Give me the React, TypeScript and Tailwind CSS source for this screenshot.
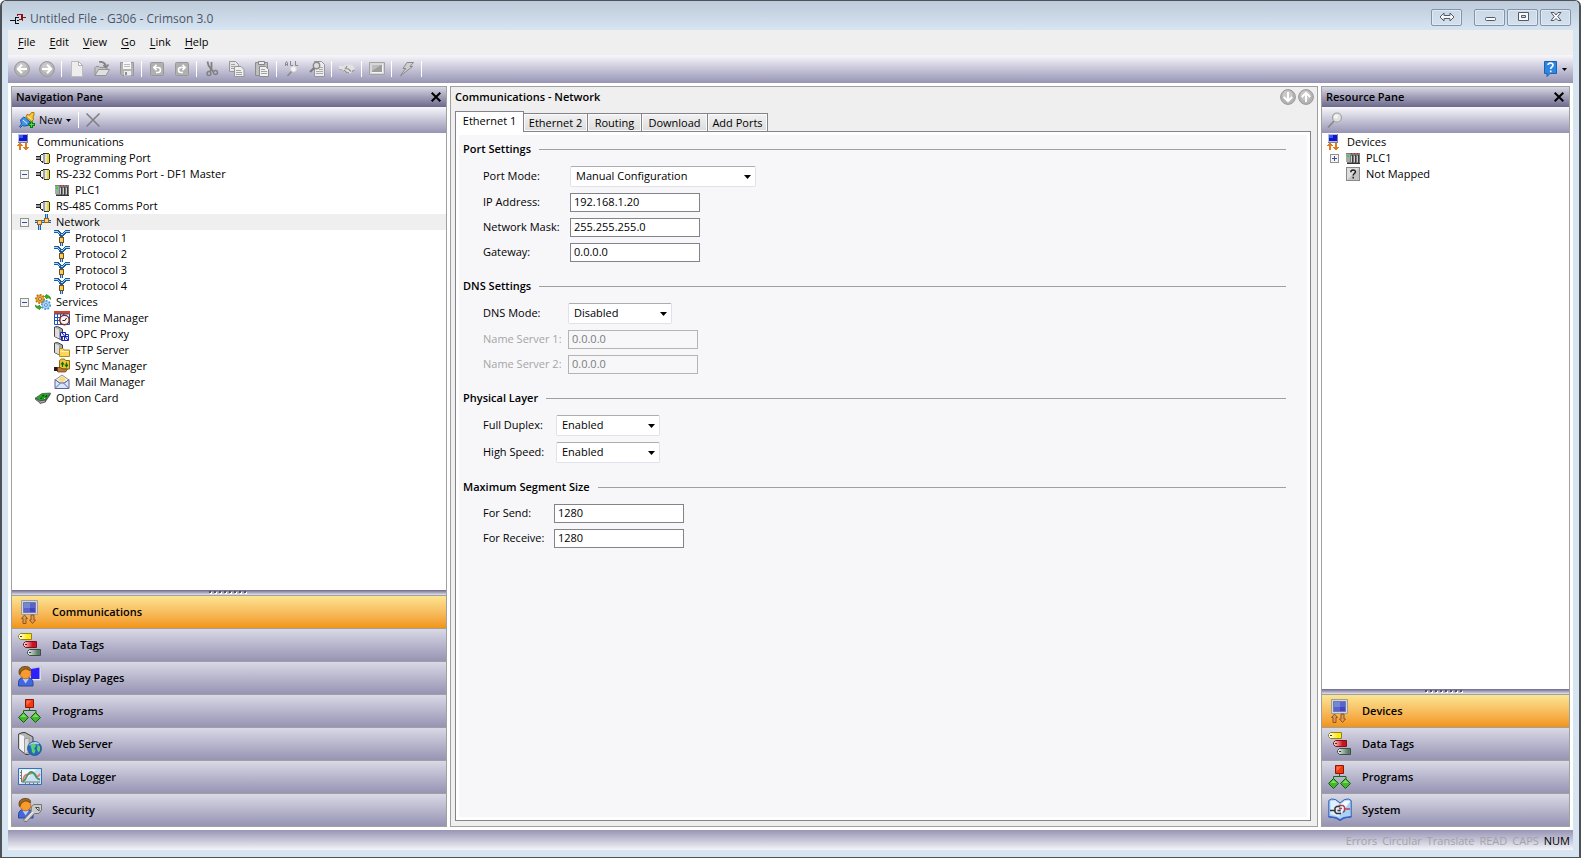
import { useId, useState } from "react";
import type { ReactNode } from "react";

type IconProps = { className?: string };

/* ---------- Small icons (16px) ---------- */

function Svg16({ children, crisp }: { children: ReactNode; crisp?: boolean }) {
  return (
    <svg className="w-4 h-4 shrink-0" viewBox="0 0 16 16" fill="none" shapeRendering={crisp ? "crispEdges" : "auto"} aria-hidden="true">
      {children}
    </svg>
  );
}

function Svg24({ children }: { children: ReactNode }) {
  return (
    <svg className="w-6 h-6 shrink-0" viewBox="0 0 24 24" fill="none" aria-hidden="true">
      {children}
    </svg>
  );
}

function AppIcon() {
  return (
    <svg className="w-4 h-4 shrink-0" viewBox="0 0 16 16" fill="none" shapeRendering="crispEdges" aria-hidden="true">
      <path d="M0 9.500h5M9 6.500H5.500v6H9M7 9.500h2" stroke="#111" />
      <path d="M7 3.500h5M12 2.500v7M12 8.500H8.500M12 6.500h4M7.500 3v2" stroke="#8c1016" />
      <path d="M11.500 3v6" stroke="#8c1016" />
    </svg>
  );
}

function PcIcon() {
  return (
    <Svg16 crisp>
      <path d="M2 0h10v9H2z" fill="#b9c0d6" />
      <path d="M3 1h8v6H3z" fill="#0d16d8" />
      <path d="M3 1h4v3H3z" fill="#3d5cf0" />
      <path d="M11 0h1v9h-1zM2 8h10v1H2z" fill="#7c8194" />
      <path d="M4 9h1v1h1v1h1v1H5v4H3v-4H1v-1h1v-1h1V9z" fill="#e07a1c" />
      <path d="M9 9h2v4h2v1h-1v1h-1v1H9v-1H8v-1H7v-1h2z" fill="#e07a1c" />
    </Svg16>
  );
}

function PortIcon() {
  return (
    <Svg16 crisp>
      <path d="M1 6h5v1H1zM1 9h5v1H1z" fill="#222" />
      <path d="M1 7h5v2H1z" fill="#9a9a9a" />
      <path d="M5 5h1V4h2V3h3v11H9v-1H7v-1H6v-1H5z" fill="#2a2a2a" />
      <path d="M6 5h2v6H6z" fill="#f4f4f4" />
      <path d="M8 4h2v9H8z" fill="#a2a2a2" />
      <path d="M10 3h4v1h1v9h-1v1h-4z" fill="#3a3a30" />
      <path d="M10 4h2v9h-2z" fill="#e4e4e4" />
      <path d="M12 4h2v9h-2z" fill="#e8dc18" />
    </Svg16>
  );
}

function PlcIcon() {
  return (
    <Svg16 crisp>
      <path d="M1 3h14v10H2l-1-1z" fill="#7a7a7a" />
      <path d="M1 4h4v8H1z" fill="#a7a7a7" />
      <path d="M6 6h1v6H6zM9 6h1v6H9zM12 6h1v6h-1z" fill="#d0d0d0" />
      <path d="M7 5h1v8H7zM10 5h1v8h-1zM13 5h1v8h-1z" fill="#3c3c3c" />
      <path d="M2 5h2v2H2z" fill="#13e62c" />
      <path d="M6 3h1v1H6zM9 3h1v1H9zM12 3h1v1h-1z" fill="#e01414" />
      <path d="M2 13h13v1H2z" fill="#333" />
    </Svg16>
  );
}

function NetworkIcon() {
  return (
    <Svg16 crisp>
      <path d="M0 6h16v3H0z" fill="#1c5fae" />
      <path d="M0 7h16v1H0z" fill="#9cd0ff" />
      <path d="M10 0h3v5h-3zM3 10h3v6H3z" fill="#1c5fae" />
      <path d="M11 0h1v5h-1zM4 10h1v6H4z" fill="#9cd0ff" />
      <path d="M2 6h5v5H2zM9 4h5v5H9z" fill="#a86400" />
      <path d="M3 7h3v3H3zM10 5h3v3h-3z" fill="#fcd27c" />
    </Svg16>
  );
}

function ProtocolIcon() {
  return (
    <Svg16 crisp>
      <path d="M0 0h5v1h1v1h1v1h2V2h1V1h1V0h5v3h-4v1h-1v1h-1v1H9v1H6V6H5V4H4V3H0z" fill="#1c5a9e" />
      <path d="M0 1h4v1h1v1h1v1h3V3h1V2h1V1h5v1h-5v1h-1v1H9v1H7V4H5V3H4V2H0z" fill="#a9d5fb" />
      <path d="M6 12h3v4H6z" fill="#1c5fae" />
      <path d="M7 12h1v4H7z" fill="#9cd0ff" />
      <path d="M5 7h5v6H5z" fill="#7a5200" />
      <path d="M6 8h3v4H6z" fill="#fbc95f" />
    </Svg16>
  );
}

function ServicesIcon() {
  return (
    <Svg16>
      <circle cx="5" cy="5" r="4" stroke="#b9720c" strokeWidth="2" strokeDasharray="1.800 1.200" />
      <circle cx="5" cy="5" r="3.600" fill="#eda42c" stroke="#c07a10" strokeWidth=".6" />
      <circle cx="5" cy="5" r="1.400" fill="#fff" stroke="#8a5200" strokeWidth=".8" />
      <circle cx="11" cy="11" r="4" stroke="#4a90d6" strokeWidth="2" strokeDasharray="1.800 1.200" />
      <circle cx="11" cy="11" r="3.600" fill="#a8d8ff" stroke="#5aa2e2" strokeWidth=".6" />
      <circle cx="11" cy="11" r="1.400" fill="#fff" stroke="#3a78ba" strokeWidth=".8" />
      <path d="M9.500 2.500L12 .3v1.200c2.500 0 3.600 1.500 3.600 4-1-1.500-2-1.800-3.600-1.700v1.200z" fill="#35b323" stroke="#14730a" strokeWidth=".6" />
      <path d="M6.500 13.500L4 15.700v-1.200c-2.500 0-3.600-1-3.700-3.500 1 1 2 1.400 3.700 1.300V11z" fill="#35b323" stroke="#14730a" strokeWidth=".6" />
    </Svg16>
  );
}

function TimeIcon() {
  return (
    <Svg16>
      <path d="M0 1h16v3H0z" fill="#d6452b" />
      <path d="M.5 4h15v10.500H.5z" fill="#fff" stroke="#1f55ac" />
      <path d="M0 7.500h16M0 10.500h16M3.500 4v10M6.500 4v10M9.500 4v10" stroke="#1f55ac" />
      <circle cx="10.500" cy="10" r="4.700" fill="#f6f6f6" stroke="#8d2a22" strokeWidth="1.500" />
      <path d="M8.500 10.500h2.500l1.500-2.500" stroke="#222" />
    </Svg16>
  );
}

function ServerShape() {
  return (
    <>
      <path d="M.5 1L3.500.5 8.500 3v10.500h-2L.5 10.500z" fill="#a6a6a6" stroke="#444" />
      <path d="M1 1.500L5 3.500v9L1 10.500z" fill="#dedede" />
    </>
  );
}

function OpcIcon() {
  return (
    <Svg16>
      <ServerShape />
      <path d="M6.500 6.500h5v4h-5zM10.500 10.500h4v4h-4z" fill="#e9ecff" stroke="#1620b8" />
      <path d="M7.500 11v3.500h3M11.500 8.500h3v2M8 7l6 7" stroke="#1620b8" />
    </Svg16>
  );
}

function FtpIcon() {
  return (
    <Svg16>
      <ServerShape />
      <path d="M5.500 14.500v-8h3.500l1 1.500h5.500v6.500z" fill="#fbd75a" stroke="#b5851e" />
      <path d="M6.500 9.500h8" stroke="#fff0b0" />
    </Svg16>
  );
}

function SyncIcon() {
  return (
    <Svg16>
      <path d="M5.500 2.500L7.500 1h3l1 1.500h4v8.500h-10z" fill="#edc832" stroke="#8d6b0c" />
      <path d="M8.500 9V5M7 6.500L8.500 4.500 10 6.500M12.500 4.500v4M11 6.700l1.500 2 1.500-2" stroke="#0a6d14" strokeWidth="1.200" />
      <path d="M3 9.500h3l3 1.500h4.500L11.500 14H4l-1-1z" fill="#c07a3e" stroke="#5d3311" strokeWidth=".7" />
      <path d="M0 9h3.500v4H0z" fill="#231b16" />
    </Svg16>
  );
}

function MailIcon() {
  return (
    <Svg16>
      <path d="M1 6l7-5 7 5-7 4z" fill="#fff6c8" stroke="#8a89b4" />
      <path d="M4 5.500L8 2l4 3.500L8 9z" fill="#f5d98a" />
      <path d="M1 5.500v9h14v-9L10.500 9h-5z" fill="#d6e6fc" stroke="#5f619c" />
      <path d="M1.500 14L6 9.500M14.500 14L10 9.500" stroke="#6a6ba0" />
    </Svg16>
  );
}

function CardIcon() {
  return (
    <Svg16>
      <path d="M.5 8L7 3.500l8.500-.5-5 7-6 .8z" fill="#2aa52c" stroke="#47524a" strokeWidth=".7" />
      <path d="M.5 8l4 2.800 6-.8v2L5 13.500 4 12 .5 9.500z" fill="#a4a4a4" stroke="#333" strokeWidth=".7" />
      <path d="M10.500 10l5-7v1.800l-5 7.200z" fill="#4a4a4a" />
      <path d="M7.500 6.500l1.500-1.500M10.500 7l1.500-1.500M5.500 8.500L7 7.800" stroke="#083d0a" strokeWidth="1.300" />
      <path d="M9 9l1-1" stroke="#8ff08a" />
    </Svg16>
  );
}

function UnmappedIcon() {
  return (
    <Svg16>
      <rect x="1.500" y="1.500" width="13" height="13" fill="#c4c4c4" stroke="#8a8a8a" />
      <path d="M2 2h12L2 14z" fill="#dedede" />
      <path d="M5.800 6.200c0-3 4.600-3 4.600-.4 0 1.700-2.200 1.700-2.200 3.600M8.200 10.800v1.700" stroke="#222" strokeWidth="1.500" />
    </Svg16>
  );
}

/* ---------- Category icons (24px) ---------- */

function CommsBigIcon() {
  return (
    <Svg24>
      <path d="M3.500.5h16v14h-16z" fill="#d4d6de" stroke="#9a9caa" />
      <path d="M5.500 2.500h12v10h-12z" fill="#4443c4" stroke="#77779f" />
      <path d="M6 3h6v5H6z" fill="#7289d6" />
      <path d="M12 3h5v5h-5zM6 8h6v4H6z" fill="#5a63cc" />
      <path d="M6.500 15l3 3.500H8v5H5v-5H3.500z" fill="#d99a5a" stroke="#94531c" />
      <path d="M14.500 23.500l-3-3.500H13v-5h3v5h1.500z" fill="#d99a5a" stroke="#94531c" />
    </Svg24>
  );
}

function TagsIcon() {
  const id = useId();
  return (
    <Svg24>
      <defs>
        <linearGradient id={id + "y"}><stop offset="0" stopColor="#fff" /><stop offset=".7" stopColor="#ffe912" /></linearGradient>
        <linearGradient id={id + "r"}><stop offset="0" stopColor="#fbe0da" /><stop offset=".7" stopColor="#cc1220" /></linearGradient>
        <linearGradient id={id + "g"}><stop offset="0" stopColor="#eef3ee" /><stop offset=".8" stopColor="#5b7a66" /></linearGradient>
      </defs>
      <path d="M2.500.5h11v6h-11l-2-2v-2z" fill={`url(#${id}y)`} stroke="#8d8420" />
      <path d="M7.500 8.500h11v6h-11l-2-2v-2z" fill={`url(#${id}r)`} stroke="#7c1218" />
      <path d="M11.500 16.500h11v6h-11l-2-2v-2z" fill={`url(#${id}g)`} stroke="#3c5044" />
      <path d="M2 3h2v1H2zM7 11h2v1H7zM11 19h2v1h-2z" fill="#333" />
    </Svg24>
  );
}

function Person() {
  return (
    <>
      <path d="M.5 20v-3.500c0-3 2-4.500 4-5h6c2 .5 4.500 2 4.500 5V20z" fill="#4468dc" stroke="#2846a0" />
      <path d="M4.500 12.500l3 5 3.500-5z" fill="#b9cdfb" />
      <circle cx="7.500" cy="7.500" r="5.300" fill="#f99a2c" stroke="#b3661a" strokeWidth=".8" />
      <path d="M1.500 8.500C-.2 4 2.500.5 7 .5c4.500 0 6 1.800 5.500 4C10 4 9.500 2.800 7.500 3c-2 .3-2 1.200-3.500 1.500-1.200.3-1 2.500-2.500 4z" fill="#9c6a24" stroke="#5c3a0c" strokeWidth=".8" />
    </>
  );
}

function PagesIcon() {
  return (
    <Svg24>
      <path d="M12 3l11-2.500v14L12 14.500z" fill="#ececf2" stroke="#c0c0cc" strokeWidth=".8" />
      <path d="M13 3l8.500-1.500V13H13z" fill="#2d20ff" />
      <Person />
    </Svg24>
  );
}

function ProgramsIcon() {
  return (
    <Svg24>
      <path d="M11.500 9v2.500M5.500 14.500v-3h12.500v3" stroke="#186818" />
      <path d="M7.500.5h8v8h-8z" fill="#f23a12" stroke="#8f1408" />
      <path d="M8.500 1.500h5l-5 5z" fill="#ff6d48" />
      <path d="M5.500 13.500l5 5-5 5-5-5z" fill="#43b82e" stroke="#17600f" />
      <path d="M17.500 13.500l5 5-5 5-5-5z" fill="#43b82e" stroke="#17600f" />
      <path d="M5.500 15l3 3h-6zM17.500 15l3 3h-6z" fill="#82dc66" />
    </Svg24>
  );
}

function WebIcon() {
  return (
    <Svg24>
      <path d="M.7 2L4 .7 7 .5l8 4.500v15l-4.500 2.500h-3L.7 16.500z" fill="#b4b4b4" stroke="#3c3c3c" />
      <path d="M1.300 2.500L6 4v16.500l-4.700-4z" fill="#f4f4f4" />
      <path d="M6.500 7L11 6v14.500L6.500 21.500z" fill="#dadada" stroke="#888" strokeWidth=".7" />
      <circle cx="16.500" cy="16.500" r="7" fill="#2568c4" stroke="#1c4a86" strokeWidth=".7" />
      <path d="M10.500 14c1.500-4 8-5.500 11-2-3 1-7-1-11 2z" fill="#a9d0f6" />
      <path d="M12.500 13.500c1.500-1.500 3-2 4.500-1.500l1 2-2 2.500 1.500 2-1.500 3.500-2-2-.5-3zM19.500 12.500l2.500 2v4l-1.500 2-1.500-3z" fill="#5fd06a" />
    </Svg24>
  );
}

function LoggerIcon() {
  return (
    <Svg24>
      <path d="M.5 3.500h23v16H.5z" fill="#c8e2f8" stroke="#3b6fb5" />
      <path d="M1.500 4.500h17l-15 14h-2z" fill="#f2f9ff" />
      <path d="M3.500 5v12H22M2 7.500h1.500M2 10.500h1.500M2 13.500h1.500M7.500 19v-1.500M11.500 19v-1.500M15.500 19v-1.500M19.500 19v-1.500" stroke="#777" />
      <path d="M5 16.500C5.500 10 8 9.500 9.500 9.500c3 0 4-2 6-1.500 2.500.8 2 3.500 4 3.500 1 0 1.500-1.500 2.500-2.500" stroke="#ec7a70" strokeWidth="1.800" />
      <path d="M4.500 16.500c4-.5 4-9.500 9-9.500 4 0 3.500 7.500 8.500 7.500" stroke="#3f9a66" strokeWidth="1.800" />
    </Svg24>
  );
}

function SecurityIcon() {
  return (
    <Svg24>
      <Person />
      <path d="M13.500 8.500L16 6.500h7.500V12l-2.500 3.500h-4.500L9 23.500H6.500l-1-1.500 7.500-8z" fill="#cacaca" stroke="#747474" />
      <path d="M17.500 9.500h3.500V13z" fill="#eee" stroke="#4a4a4a" />
      <path d="M8 21.500l7-7.500" stroke="#f2f2f2" />
    </Svg24>
  );
}

function SystemIcon() {
  return (
    <Svg24>
      <path d="M.8 2.500L3.500 1l4 .5L12 5l4.500-3.500 4-.5 2.700 1.500v16.500l-4 .5-3.200.5-4 2.500-4-2.500-3.200-.5-4-.5z" fill="#a9d2f8" stroke="#2e5fae" />
      <path d="M.8 18.800l4 .5 3.200.5 4 2.200 4-2.200 3.200-.5 4-.5" stroke="#3b62c4" strokeWidth="1.600" />
      <path d="M2.500 3l4.500-.5 4.500 3.500v13l-9-3z" fill="#e2f0fe" />
      <path d="M17 3l3.500-.5 1.500 1-9 12V6z" fill="#f4faff" />
      <path d="M2 12.500h5M12 8.500H8.500l-1.500 1.500v4l1.500 1.500H13M9.500 12.500h3" stroke="#333" strokeWidth="1.500" />
      <path d="M10.500 7.500h4.500l1.500 1.500v4L15 14.500M11 10.500h3M16.500 11h5.500" stroke="#b0444e" strokeWidth="1.500" />
    </Svg24>
  );
}

/* ---------- Toolbar icons ---------- */

function Arrow({ rotate }: { rotate: string }) {
  return (
    <svg className="w-4 h-4 shrink-0" viewBox="0 0 16 16" fill="none" aria-hidden="true">
      <circle cx="8" cy="8" r="7.400" fill="#b4b4b4" stroke="#989898" />
      <circle cx="7.500" cy="6.500" r="5" fill="#c8c8c8" />
      <g transform={rotate}>
        <path d="M13 8H4M8 3.800L3.800 8 8 12.200" stroke="#fff" strokeWidth="2" />
      </g>
    </svg>
  );
}

const toolIcons: Record<string, ReactNode> = {
  Back: <Arrow rotate="rotate(0 8 8)" />,
  Forward: <Arrow rotate="rotate(180 8 8)" />,
  New: (
    <Svg16>
      <path d="M2.500.5h7l4 4v11h-11z" fill="#ededed" stroke="#bdbdbd" />
      <path d="M9.500.5v4h4z" fill="#fff" stroke="#b0b0b0" />
    </Svg16>
  ),
  Open: (
    <Svg16>
      <path d="M1 14.500v-8l1-1h3l1 1h7v3" fill="#c4c4c4" stroke="#949494" />
      <path d="M1 14.500l3.500-6h11l-3.500 6z" fill="#e0e0e0" stroke="#949494" />
      <path d="M5 .8c4-.3 6.500 1.700 7 5M9.500 4l2.500 2.500L14.500 3.500" stroke="#858585" strokeWidth="1.800" />
    </Svg16>
  ),
  Save: (
    <Svg16>
      <path d="M1.500 1.500h13v13H3l-1.500-1.500z" fill="#b4b4b4" stroke="#979797" />
      <path d="M4 1h8v7H4z" fill="#f6f6f6" />
      <path d="M5 3.500h6M5 5.500h6" stroke="#bbb" />
      <path d="M5 10h7v4.500H5z" fill="#ececec" />
      <path d="M6 11h2v3H6z" fill="#8e8e8e" />
    </Svg16>
  ),
  Undo: (
    <Svg16>
      <rect x="1.500" y="1.500" width="13" height="13" rx="1" fill="#b0b0b0" stroke="#989898" />
      <path d="M5 6.500h4a2.300 2.300 0 010 5H7M7.500 3.800L4.800 6.500l2.700 2.700" stroke="#fff" strokeWidth="1.600" />
    </Svg16>
  ),
  Redo: (
    <Svg16>
      <rect x="1.500" y="1.500" width="13" height="13" rx="1" fill="#b0b0b0" stroke="#989898" />
      <path d="M11 6.500H7a2.300 2.300 0 000 5h2M8.500 3.800l2.700 2.700-2.700 2.700" stroke="#fff" strokeWidth="1.600" />
    </Svg16>
  ),
  Cut: (
    <Svg16>
      <path d="M3.500.5l1 4 5 6.500M7.500 1v6L6 11" stroke="#808080" strokeWidth="1.800" />
      <circle cx="5" cy="12.500" r="2" stroke="#808080" strokeWidth="1.400" />
      <circle cx="11.500" cy="11.500" r="2" stroke="#808080" strokeWidth="1.400" />
    </Svg16>
  ),
  Copy: (
    <Svg16>
      <path d="M.5.5h6l3 3v7h-9z" fill="#e6e6e6" stroke="#969696" />
      <path d="M5.500 5.500h6.500l3 3v7H5.500z" fill="#efefef" stroke="#969696" />
      <path d="M2 3.500h4M2 5.500h3M2 7.500h3M7 9.500h5M7 11.500h6M7 13.500h6" stroke="#a2a2a2" />
    </Svg16>
  ),
  Paste: (
    <Svg16>
      <path d="M1.500 1.500h12v13h-12z" fill="#bebebe" stroke="#8c8c8c" />
      <path d="M4.500.5h6v3h-6z" fill="#eee" stroke="#858585" />
      <path d="M5.500 5.500h6l3 3v7h-9z" fill="#f0f0f0" stroke="#8c8c8c" />
      <path d="M7 8.500h4M7 10.500h6M7 12.500h6" stroke="#a2a2a2" />
    </Svg16>
  ),
  "Find All": (
    <Svg16>
      <path d="M1.500 5V2l1-1.500 1 1.500v3M1.500 3.500h2M6.500 0v4.500H9M11.500 0v4.500H14" stroke="#8a8a8a" />
      <circle cx="9.500" cy="8" r="2.800" fill="#f4f4f4" stroke="#dcdcdc" />
      <path d="M7.500 10.500L3.500 15" stroke="#8a8a8a" strokeWidth="1.500" />
    </Svg16>
  ),
  Find: (
    <Svg16>
      <path d="M5.500.5h7l3 3v12h-10z" fill="#ececec" stroke="#969696" />
      <path d="M11 6.500h3M10 8.500h4M7 10.500h7M7 12.500h7" stroke="#aaa" />
      <circle cx="7.500" cy="4.500" r="3.200" fill="#ddd" stroke="#8a8a8a" strokeWidth="1.400" />
      <path d="M5.200 7L1 11" stroke="#7c7c7c" strokeWidth="2.200" />
    </Svg16>
  ),
  Connect: (
    <Svg16>
      <path d="M0 4.500l4 .5 3-1.500h5l3 2 1 3.500-3 1.500-1 1.500-2.500 1L6 11.500 3 9 0 8.500z" fill="#e2e2e2" />
      <path d="M5 9l3 3M8 5L6.500 7.500l3 .5 2.500 2.500M10 12.500L8.500 11M13 10.500l2.500-1.500" stroke="#909090" strokeWidth="1.200" />
      <path d="M0 8.500h2.500L5 10.500" stroke="#a8a8a8" />
    </Svg16>
  ),
  Emulator: (
    <Svg16>
      <path d="M.5 1.500h15v12H.5z" fill="#d8d8d8" stroke="#a2a2a2" />
      <path d="M3 4h10v7H3z" fill="#9c9c9c" />
      <path d="M3 4h9l-9 6z" fill="#bcbcbc" />
      <path d="M2.500 11.500h11V3.500" stroke="#f4f4f4" />
    </Svg16>
  ),
  Update: (
    <Svg16>
      <path d="M8 1.500h6.500L11 5.500h2.500L5 12 1.500 15 4 11l3-3.500H4z" fill="#cfcfcf" stroke="#8a8a8a" />
    </Svg16>
  ),
};

function PlugIcon() {
  return (
    <Svg16>
      <path d="M8 2.500l2.500.5L12.500.5H15V3l-1 2 .5 2.500-2 2L7 5z" fill="#fcc62c" stroke="#a0700a" strokeWidth=".9" />
      <path d="M1.500 8L4.500 5l2 1L11 10l-2 3.500-4 .5-1.500-.5L1.500 15.500l-1-1L2.500 12z" fill="#3f96e6" stroke="#0f4e96" strokeWidth=".9" />
      <path d="M4 8l4 3.500M9 4.500l3 2.500" stroke="#dff0ff" />
      <path d="M12.500 9.500v6.500M9.500 12.500h6.500" stroke="#0d7a10" strokeWidth="3" />
      <path d="M12.500 10.500v4.500M10.500 12.500h4.500" stroke="#4ade46" />
    </Svg16>
  );
}

function CloseGlyph({ className }: IconProps) {
  return (
    <svg className={className} viewBox="0 0 10 10" fill="none" stroke="currentColor" strokeWidth="2" aria-hidden="true">
      <path d="M.7.7l8.600 8.600M9.300.7L.7 9.300" />
    </svg>
  );
}

function Caret() {
  return (
    <svg className="w-[7px] h-1 shrink-0" viewBox="0 0 7 4" aria-hidden="true">
      <path d="M0 0h7L3.500 4z" fill="#000" />
    </svg>
  );
}

function SmallCaret() {
  return (
    <svg className="w-[5px] h-[3px] shrink-0" viewBox="0 0 5 3" aria-hidden="true">
      <path d="M0 0h5L2.500 3z" fill="#000" />
    </svg>
  );
}

/* ---------- Data ---------- */

const menus = ["File", "Edit", "View", "Go", "Link", "Help"];

const toolGroups = [
  ["Back", "Forward"],
  ["New", "Open", "Save"],
  ["Undo", "Redo"],
  ["Cut", "Copy", "Paste"],
  ["Find All", "Find"],
  ["Connect"],
  ["Emulator"],
  ["Update"],
];

type TreeItem = { label: string; level: 0 | 1 | 2; icon: ReactNode; toggle?: "open" | "closed"; selected?: boolean };

const navTree: TreeItem[] = [
  { label: "Communications", level: 0, icon: <PcIcon /> },
  { label: "Programming Port", level: 1, icon: <PortIcon /> },
  { label: "RS-232 Comms Port - DF1 Master", level: 1, icon: <PortIcon />, toggle: "open" },
  { label: "PLC1", level: 2, icon: <PlcIcon /> },
  { label: "RS-485 Comms Port", level: 1, icon: <PortIcon /> },
  { label: "Network", level: 1, icon: <NetworkIcon />, toggle: "open", selected: true },
  { label: "Protocol 1", level: 2, icon: <ProtocolIcon /> },
  { label: "Protocol 2", level: 2, icon: <ProtocolIcon /> },
  { label: "Protocol 3", level: 2, icon: <ProtocolIcon /> },
  { label: "Protocol 4", level: 2, icon: <ProtocolIcon /> },
  { label: "Services", level: 1, icon: <ServicesIcon />, toggle: "open" },
  { label: "Time Manager", level: 2, icon: <TimeIcon /> },
  { label: "OPC Proxy", level: 2, icon: <OpcIcon /> },
  { label: "FTP Server", level: 2, icon: <FtpIcon /> },
  { label: "Sync Manager", level: 2, icon: <SyncIcon /> },
  { label: "Mail Manager", level: 2, icon: <MailIcon /> },
  { label: "Option Card", level: 1, icon: <CardIcon /> },
];

const resourceTree: TreeItem[] = [
  { label: "Devices", level: 0, icon: <PcIcon /> },
  { label: "PLC1", level: 1, icon: <PlcIcon />, toggle: "closed" },
  { label: "Not Mapped", level: 1, icon: <UnmappedIcon /> },
];

type Category = { label: string; icon: ReactNode };

const navCategories: Category[] = [
  { label: "Communications", icon: <CommsBigIcon /> },
  { label: "Data Tags", icon: <TagsIcon /> },
  { label: "Display Pages", icon: <PagesIcon /> },
  { label: "Programs", icon: <ProgramsIcon /> },
  { label: "Web Server", icon: <WebIcon /> },
  { label: "Data Logger", icon: <LoggerIcon /> },
  { label: "Security", icon: <SecurityIcon /> },
];

const resourceCategories: Category[] = [
  { label: "Devices", icon: <CommsBigIcon /> },
  { label: "Data Tags", icon: <TagsIcon /> },
  { label: "Programs", icon: <ProgramsIcon /> },
  { label: "System", icon: <SystemIcon /> },
];

const tabs = [
  { label: "Ethernet 1", width: "w-[69px]" },
  { label: "Ethernet 2", width: "w-[65px]" },
  { label: "Routing", width: "w-[55px]" },
  { label: "Download", width: "w-[67px]" },
  { label: "Add Ports", width: "w-[61px]" },
];

/* ---------- Panes ---------- */

function PaneHeader({ title }: { title: string }) {
  return (
    <div className="h-5 shrink-0 flex items-center justify-between pl-1 pr-[5px] bg-linear-to-b from-[#d8d7e4] to-[#6c698b]">
      <h2 className="font-semibold">{title}</h2>
      <button aria-label={`Close ${title}`}>
        <CloseGlyph className="w-[10px] h-[10px]" />
      </button>
    </div>
  );
}

function Tree({ items }: { items: TreeItem[] }) {
  const indent = { 0: "pl-1", 1: "pl-2", 2: "pl-[42px]" };
  return (
    <ul className="flex-1 min-h-0 overflow-hidden bg-white pt-px">
      {items.map((item) => (
        <li key={item.label} className={`h-4 flex items-center ${indent[item.level]} ${item.selected ? "bg-[#efefef]" : ""}`}>
          {item.level === 1 && (
            <span className="w-[15px] shrink-0 flex">
              {item.toggle && (
                <button aria-label={`Toggle ${item.label}`} className="w-[9px] h-[9px] border border-[#919191] bg-[#f4f4f4]">
                  <svg className="w-[7px] h-[7px]" viewBox="0 0 7 7" shapeRendering="crispEdges" stroke="#3b4f9c">
                    <path d="M1 3.500h5" />
                    {item.toggle === "closed" && <path d="M3.500 1v5" />}
                  </svg>
                </button>
              )}
            </span>
          )}
          {item.icon}
          <span className="pl-[5px] whitespace-nowrap">{item.label}</span>
        </li>
      ))}
    </ul>
  );
}

function CategoryList({ items }: { items: Category[] }) {
  const [active, setActive] = useState(items[0].label);
  return (
    <div className="shrink-0">
      <div className="h-[6px] flex justify-center items-start gap-[3px] pt-px pr-1 border-b border-[#a0a0a0] bg-linear-to-b from-[#6c698b] to-[#e4e3ee]">
        {Array.from({ length: 8 }, (_, i) => (
          <span key={i} className="w-[2px] h-[2px] bg-[#55545f] shadow-[1px_1px_0_#ffffff]" />
        ))}
      </div>
      {items.map((item, i) => (
        <button
          key={item.label}
          onClick={() => setActive(item.label)}
          className={`w-full flex items-center gap-[10px] pl-[6px] font-semibold text-left bg-linear-to-b ${
            i < items.length - 1 ? "h-[33px] border-b border-[#a0a0a0]" : "h-8"
          } ${active === item.label ? "from-[#fbe592] to-[#f1950f]" : "from-[#dad9e6] to-[#9694b3]"}`}
        >
          {item.icon}
          {item.label}
        </button>
      ))}
    </div>
  );
}

/* ---------- Form ---------- */

function Group({ title, columns, className = "", children }: { title: string; columns: string; className?: string; children: ReactNode }) {
  const id = useId();
  return (
    <section role="group" aria-labelledby={id} className={className}>
      <div className="flex items-center gap-2 h-4">
        <h3 id={id} className="font-semibold">{title}</h3>
        <span className="flex-1 h-px bg-[#a0a0a0]" />
      </div>
      <div className={`pl-5 pt-[9px] grid items-center gap-y-[6px] justify-start ${columns}`}>{children}</div>
    </section>
  );
}

function TextField({ label, value, disabled }: { label: string; value: string; disabled?: boolean }) {
  const id = useId();
  return (
    <>
      <label htmlFor={id} className={`pb-[2px] whitespace-nowrap ${disabled ? "text-[#a5a5a5]" : ""}`}>{label}</label>
      <input
        id={id}
        defaultValue={value}
        disabled={disabled}
        className="w-[130px] h-[19px] border border-[#83838c] bg-white px-[3px] pb-[2px] disabled:border-[#b4b4b4] disabled:bg-[#f7f7fa] disabled:text-[#7c7c7c]"
      />
    </>
  );
}

function SelectField({ label, value, width }: { label: string; value: string; width: string }) {
  const id = useId();
  return (
    <>
      <label htmlFor={id} className="pb-[2px] whitespace-nowrap">{label}</label>
      <span className={`relative flex ${width}`}>
        <select
          id={id}
          defaultValue={value}
          className="w-full h-[21px] appearance-none rounded-xs border border-[#e0e1ea] border-t-[#abadb3] bg-white pl-[5px] pr-4 pb-[2px]"
        >
          <option>{value}</option>
        </select>
        <span className="absolute right-[5px] top-[9px] flex pointer-events-none">
          <Caret />
        </span>
      </span>
    </>
  );
}

function WindowButton({ label, children }: { label: string; children: ReactNode }) {
  return (
    <button
      aria-label={label}
      className="w-[31px] h-[17px] flex items-center justify-center rounded-xs border border-[#8593a9] bg-linear-to-b from-[#cbd9e7] to-[#d3e1ee] shadow-[inset_0_0_0_1px_#e0eaf4]"
    >
      <svg className="w-4 h-3" viewBox="0 0 16 12" fill="#f8f8f8" stroke="#545868" aria-hidden="true">
        {children}
      </svg>
    </button>
  );
}

export default function App() {
  const [tab, setTab] = useState(tabs[0].label);

  return (
    <div className="h-screen flex flex-col overflow-hidden rounded-t-md border-t border-x-2 border-b border-[#4d5158] bg-[#d7e5f2] px-[6px] pb-[7px] font-['Open_Sans','Noto_Sans',sans-serif] text-[11px] leading-4 text-black">
      {/* Title bar */}
      <header className="h-[29px] shrink-0 -mx-[6px] px-2 pt-[7px] flex items-center bg-linear-to-b from-[#bccad9] to-[#d7e5f2]">
        <AppIcon />
        <h1 className="pl-1 text-xs text-[#4c5668]">Untitled File - G306 - Crimson 3.0</h1>
        <div className="ml-auto flex gap-[2px] pb-1">
          <span className="pr-[10px]">
            <WindowButton label="Switch monitor">
              <path d="M1 6l4-4v2.500h6V2l4 4-4 4V7.500H5V10z" />
            </WindowButton>
          </span>
          <WindowButton label="Minimize">
            <rect x="3.500" y="6.500" width="10" height="3" rx="1" />
          </WindowButton>
          <WindowButton label="Restore">
            <path fillRule="evenodd" d="M3.500 1.500h10v8h-10zM6.500 4.500v2h4v-2z" />
          </WindowButton>
          <WindowButton label="Close">
            <path d="M3 1.500h3l2 2.500 2-2.500h3L9.800 5.500l3.200 4h-3L8 7.500l-2 2H3l3.200-4z" />
          </WindowButton>
        </div>
      </header>

      {/* Menu */}
      <nav className="h-[25px] shrink-0 flex items-center gap-[14px] pl-[10px] pb-[2px] bg-[#efefef]">
        {menus.map((m) => (
          <button key={m}>
            <span className="underline underline-offset-2">{m[0]}</span>
            {m.slice(1)}
          </button>
        ))}
      </nav>

      {/* Toolbar */}
      <div className="h-7 shrink-0 flex items-center pl-px pr-[6px] bg-linear-to-b from-[#f8f7fb] to-[#9795b4]">
        {toolGroups.map((group) => (
          <div key={group[0]} className="flex items-center">
            {group.map((name) => (
              <button key={name} aria-label={name} className="w-[25px] flex justify-center">
                {toolIcons[name]}
              </button>
            ))}
            <span className="mx-[2px] w-px h-4 bg-white" />
          </div>
        ))}
        <button aria-label="Help topics" className="ml-auto flex items-center gap-1">
          <svg className="w-4 h-4" viewBox="0 0 16 16" fill="none" aria-hidden="true">
            <path d="M2.500.5h12v12H8L5 15.500v-3H2.500z" fill="#2f86e0" stroke="#1a62b4" />
            <path d="M6 4c.3-2.500 5-2.500 5 .3 0 1.700-2.300 1.700-2.300 3.700M8.700 9.500v1.700" stroke="#fff" strokeWidth="1.600" />
          </svg>
          <SmallCaret />
        </button>
      </div>

      {/* Panes */}
      <div className="flex-1 min-h-0 flex bg-white p-[3px]">
        <aside className="w-[436px] shrink-0 flex flex-col border border-[#a0a0a0]">
          <PaneHeader title="Navigation Pane" />
          <div className="h-[26px] shrink-0 flex items-center pl-[7px] bg-linear-to-b from-[#f8f7fb] to-[#9795b4]">
            <button className="flex items-center gap-1">
              <PlugIcon />
              <span>New</span>
              <SmallCaret />
            </button>
            <span className="mx-[7px] w-px h-4 bg-white" />
            <button aria-label="Delete">
              <svg className="w-[14px] h-[14px]" viewBox="0 0 14 14" fill="none" stroke="#7e7e84" strokeWidth="1.500" aria-hidden="true">
                <path d="M.5.5l13 13M13.500.5L.5 13.500" />
              </svg>
            </button>
          </div>
          <Tree items={navTree} />
          <CategoryList items={navCategories} />
        </aside>

        <main className="flex-1 min-w-0 mx-[3px] flex flex-col border border-[#a0a0a0] bg-[#efefef] pl-1 pr-[6px] pb-[5px]">
          <div className="h-6 shrink-0 flex items-center justify-between -mr-[3px] pb-1">
            <h2 className="font-semibold">Communications - Network</h2>
            <div className="flex gap-[2px]">
              <button aria-label="Next item"><Arrow rotate="rotate(270 8 8)" /></button>
              <button aria-label="Previous item"><Arrow rotate="rotate(90 8 8)" /></button>
            </div>
          </div>
          <div role="tablist" className="relative z-10 -mb-px flex items-end shrink-0">
            {tabs.map(({ label, width }) => (
              <button
                key={label}
                role="tab"
                aria-selected={label === tab}
                onClick={() => setTab(label)}
                className={`${width} whitespace-nowrap border border-[#83838c] ${
                  label === tab
                    ? "h-[21px] pb-[2px] border-b-0 bg-white"
                    : "h-[19px] -ml-px bg-linear-to-b from-[#f2f2f2] to-[#dcdcdc] shadow-[inset_0_0_0_1px_#fafafa]"
                }`}
              >
                {label}
              </button>
            ))}
          </div>
          <div role="tabpanel" className="flex-1 min-h-0 border border-[#83838c] bg-white p-[3px]">
            <form className="h-full bg-[#f7f7fa] pl-1 pr-[21px] pt-[6px]">
              <Group title="Port Settings" columns="grid-cols-[87px_auto]">
                <SelectField label="Port Mode:" value="Manual Configuration" width="w-[186px]" />
                <TextField label="IP Address:" value="192.168.1.20" />
                <TextField label="Network Mask:" value="255.255.255.0" />
                <TextField label="Gateway:" value="0.0.0.0" />
              </Group>
              <Group title="DNS Settings" columns="grid-cols-[85px_auto]" className="pt-4">
                <SelectField label="DNS Mode:" value="Disabled" width="w-[104px]" />
                <TextField label="Name Server 1:" value="0.0.0.0" disabled />
                <TextField label="Name Server 2:" value="0.0.0.0" disabled />
              </Group>
              <Group title="Physical Layer" columns="grid-cols-[73px_auto]" className="pt-4">
                <SelectField label="Full Duplex:" value="Enabled" width="w-[104px]" />
                <SelectField label="High Speed:" value="Enabled" width="w-[104px]" />
              </Group>
              <Group title="Maximum Segment Size" columns="grid-cols-[71px_auto]" className="pt-4">
                <TextField label="For Send:" value="1280" />
                <TextField label="For Receive:" value="1280" />
              </Group>
            </form>
          </div>
        </main>

        <aside className="w-[249px] shrink-0 flex flex-col border border-[#a0a0a0]">
          <PaneHeader title="Resource Pane" />
          <div className="h-[26px] shrink-0 flex items-center pl-[5px] bg-linear-to-b from-[#f8f7fb] to-[#9795b4]">
            <button aria-label="Search">
              <Svg16>
                <path d="M1 15.500L7 9" stroke="#8a8a8a" strokeWidth="1.800" />
                <circle cx="10" cy="5.500" r="4.500" fill="#e2e2e2" stroke="#a2a2a2" strokeWidth="1.200" />
                <circle cx="9" cy="4.500" r="2" fill="#f6f6f6" />
              </Svg16>
            </button>
          </div>
          <Tree items={resourceTree} />
          <CategoryList items={resourceCategories} />
        </aside>
      </div>

      {/* Status bar */}
      <footer className="h-5 shrink-0 flex items-center justify-end gap-[5px] pr-[3px] pt-[2px] bg-linear-to-b from-[#9795b4] to-[#f5f5fa] text-[#a2a2a6]">
        <span>Errors</span>
        <span>Circular</span>
        <span>Translate</span>
        <span>READ</span>
        <span>CAPS</span>
        <span className="text-black">NUM</span>
      </footer>
    </div>
  );
}
